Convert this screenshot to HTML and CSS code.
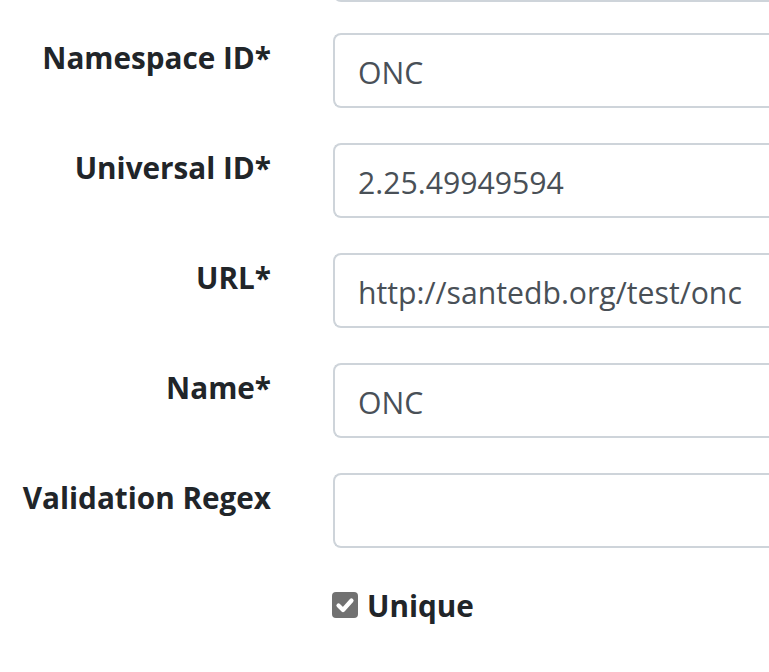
FILE: index.html
```html
<!DOCTYPE html>
<html lang="en">
<head>
<meta charset="utf-8">
<title>Identity Domain</title>
<link rel="stylesheet" href="styles.css">
</head>
<body>
<form class="form">
  <div class="row row-prev">
    <label class="label"></label>
    <input class="input" type="text" value="">
  </div>
  <div class="row">
    <label class="label" for="ns">Namespace ID*</label>
    <input class="input" id="ns" type="text" value="ONC">
  </div>
  <div class="row">
    <label class="label" for="oid">Universal ID*</label>
    <input class="input" id="oid" type="text" value="2.25.49949594">
  </div>
  <div class="row">
    <label class="label" for="url">URL*</label>
    <input class="input" id="url" type="text" value="http://santedb.org/test/onc">
  </div>
  <div class="row">
    <label class="label" for="name">Name*</label>
    <input class="input" id="name" type="text" value="ONC">
  </div>
  <div class="row">
    <label class="label" for="regex">Validation Regex</label>
    <input class="input" id="regex" type="text" value="">
  </div>
  <div class="row row-check">
    <span class="label"></span>
    <label class="check">
      <span class="check-box">
        <svg width="26" height="26" viewBox="0 0 26 26" aria-hidden="true">
          <polyline points="6.5,13.5 11,18 19.5,8.5" fill="none" stroke="#fff" stroke-width="4.2" stroke-linecap="round" stroke-linejoin="round"/>
        </svg>
      </span>
      <span class="check-text">Unique</span>
    </label>
  </div>
</form>
</body>
</html>
```
FILE: styles.css
```css
html, body {
  overflow: hidden;
}
body {
  margin: 0;
  font-family: "Open Sans", "Noto Sans", sans-serif;
  color: #212529;
  background: #fff;
}
.form {
  display: flex;
  flex-direction: column;
  gap: 35px;
  margin-top: -73px;
}
.row {
  display: grid;
  grid-template-columns: 271px minmax(0, 1fr);
  column-gap: 62px;
  align-items: start;
}
.row-prev {
  margin-bottom: -4px;
}
.label {
  display: block;
  text-align: right;
  font-weight: 700;
  font-size: 29.7px;
  line-height: 45px;
  padding-top: 2px;
  color: #212529;
  white-space: nowrap;
}
.input {
  display: block;
  box-sizing: border-box;
  width: 100%;
  height: 75px;
  margin: 0;
  border: 2px solid #ced4da;
  border-right-width: 0;
  border-radius: 8px 0 0 8px;
  padding: 4px 0 0 23px;
  font-family: "Open Sans", "Noto Sans", sans-serif;
  font-size: 30.2px;
  color: #495057;
  background: #fff;
  outline: none;
}
.row-check {
  margin-top: -2px;
}
.check {
  display: flex;
  align-items: flex-start;
  gap: 9px;
  margin-left: -1px;
}
.check-box {
  display: block;
  width: 26px;
  height: 26px;
  margin-top: 11px;
  border-radius: 4px;
  background: #717171;
}
.check-box svg {
  display: block;
}
.check-text {
  font-weight: 700;
  font-size: 29.7px;
  line-height: 45px;
  padding-top: 2px;
  color: #212529;
}
```
